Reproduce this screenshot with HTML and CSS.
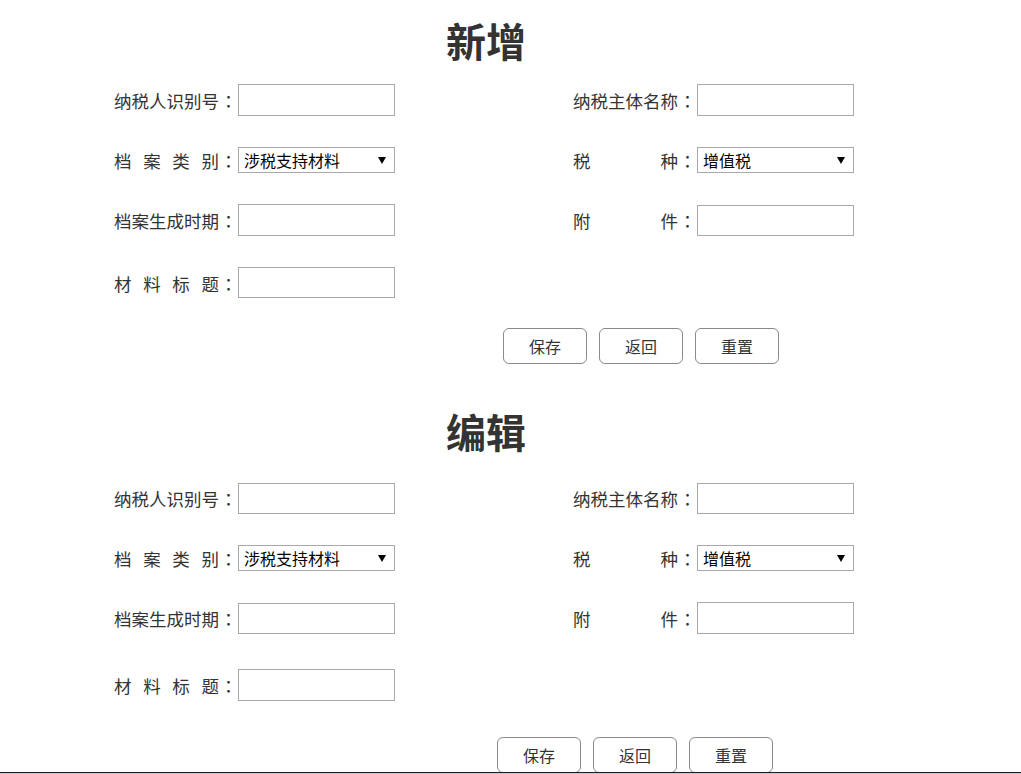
FILE: index.html
```html
<!DOCTYPE html>
<html lang="zh-CN">
  <head>
    <meta charset="UTF-8" />
    <meta name="viewport" content="width=device-width, initial-scale=1.0" />
    <title>涉税档案</title>
    <link rel="stylesheet" href="styles.css">
  </head>
  <body>
    <div class="page">
      <!-- 新增 -->
      <section class="panel panel-add">
        <h2 class="panel-title">新增</h2>
        <div class="form-grid">
          <div class="field">
            <label class="field-label"><span class="label-name">纳税人识别号</span><span class="label-colon">：</span></label>
            <input type="text" class="field-input" />
          </div>
          <div class="field">
            <label class="field-label"><span class="label-name">纳税主体名称</span><span class="label-colon">：</span></label>
            <input type="text" class="field-input" />
          </div>
          <div class="field">
            <label class="field-label"><span class="label-name">档案类别</span><span class="label-colon">：</span></label>
            <div class="select-wrap">
              <select class="field-select">
                <option>涉税支持材料</option>
              </select>
            </div>
          </div>
          <div class="field">
            <label class="field-label"><span class="label-name">税种</span><span class="label-colon">：</span></label>
            <div class="select-wrap">
              <select class="field-select">
                <option>增值税</option>
              </select>
            </div>
          </div>
          <div class="field">
            <label class="field-label"><span class="label-name">档案生成时期</span><span class="label-colon">：</span></label>
            <input type="text" class="field-input" />
          </div>
          <div class="field">
            <label class="field-label"><span class="label-name">附件</span><span class="label-colon">：</span></label>
            <input type="text" class="field-input short" />
          </div>
          <div class="field">
            <label class="field-label"><span class="label-name">材料标题</span><span class="label-colon">：</span></label>
            <input type="text" class="field-input short" />
          </div>
        </div>
        <div class="actions">
          <button class="btn">保存</button>
          <button class="btn">返回</button>
          <button class="btn">重置</button>
        </div>
      </section>

      <!-- 编辑 -->
      <section class="panel panel-edit">
        <h2 class="panel-title">编辑</h2>
        <div class="form-grid">
          <div class="field">
            <label class="field-label"><span class="label-name">纳税人识别号</span><span class="label-colon">：</span></label>
            <input type="text" class="field-input short" />
          </div>
          <div class="field">
            <label class="field-label"><span class="label-name">纳税主体名称</span><span class="label-colon">：</span></label>
            <input type="text" class="field-input short" />
          </div>
          <div class="field">
            <label class="field-label"><span class="label-name">档案类别</span><span class="label-colon">：</span></label>
            <div class="select-wrap">
              <select class="field-select">
                <option>涉税支持材料</option>
              </select>
            </div>
          </div>
          <div class="field">
            <label class="field-label"><span class="label-name">税种</span><span class="label-colon">：</span></label>
            <div class="select-wrap">
              <select class="field-select">
                <option>增值税</option>
              </select>
            </div>
          </div>
          <div class="field">
            <label class="field-label"><span class="label-name">档案生成时期</span><span class="label-colon">：</span></label>
            <input type="text" class="field-input short" />
          </div>
          <div class="field">
            <label class="field-label"><span class="label-name">附件</span><span class="label-colon">：</span></label>
            <input type="text" class="field-input" />
          </div>
          <div class="field">
            <label class="field-label"><span class="label-name">材料标题</span><span class="label-colon">：</span></label>
            <input type="text" class="field-input" />
          </div>
        </div>
        <div class="actions">
          <button class="btn">保存</button>
          <button class="btn">返回</button>
          <button class="btn">重置</button>
        </div>
      </section>
      <div class="page-bottom"></div>
    </div>
  </body>
</html>
```

FILE: styles.css
```css
body {
  margin: 0;
  padding: 0;
  background-color: #fff;
  color: #333;
  font-family: "Noto Sans CJK SC", sans-serif;
}
.page {
  width: 1021px;
  overflow: hidden;
}
.panel-add {
  padding-top: 16px;
}
.panel-edit {
  margin-top: 43px;
}
.panel-title {
  width: 972px;
  margin: 0;
  font-size: 40px;
  line-height: 48px;
  font-weight: bold;
  text-align: center;
  color: #333;
}

/* two column form */
.form-grid {
  display: grid;
  grid-template-columns: 459px 459px;
  padding-left: 114px;
}
.panel-add .form-grid {
  margin-top: 6px;
  grid-template-rows: 60px 60px 60px 65px;
}
.panel-edit .form-grid {
  margin-top: 13px;
  grid-template-rows: 60px 60px 60px 74px;
}
.field {
  display: flex;
  align-items: center;
}
.field-label {
  flex: 0 0 124px;
  font-size: 17.5px;
  line-height: 24px;
  padding-top: 2px;
  color: #333;
  white-space: nowrap;
}
.label-name {
  display: inline-block;
  width: 105px;
  text-align: justify;
  text-align-last: justify;
  vertical-align: top;
}
.label-colon {
  display: inline-block;
  width: 19px;
  text-align: center;
  vertical-align: top;
  font-family: "Noto Sans CJK TC", sans-serif;
}
.field-input {
  box-sizing: border-box;
  width: 157px;
  height: 32px;
  margin: 0;
  padding: 0 4px;
  border: 1px solid #a9a9a9;
  border-radius: 0;
  font-size: 16px;
  background: #fff;
}
.field-input.short {
  height: 31px;
}
.select-wrap {
  position: relative;
  width: 157px;
  height: 26px;
}
.select-wrap::after {
  content: "";
  position: absolute;
  right: 9px;
  top: 10px;
  border-left: 4px solid transparent;
  border-right: 4px solid transparent;
  border-top: 7px solid #000;
  pointer-events: none;
}
.field-select {
  -webkit-appearance: none;
  appearance: none;
  box-sizing: border-box;
  width: 157px;
  height: 26px;
  margin: 0;
  padding: 0 0 0 5px;
  border: 1px solid #a9a9a9;
  border-radius: 0;
  background: #fff;
  color: #000;
  font-family: "Noto Sans CJK SC", sans-serif;
  font-size: 16px;
  line-height: 24px;
}

/* buttons */
.actions {
  display: flex;
  gap: 12px;
}
.panel-add .actions {
  margin-top: 13px;
  padding-left: 503px;
}
.panel-edit .actions {
  margin-top: 15px;
  padding-left: 497px;
}
.btn {
  box-sizing: border-box;
  width: 84px;
  height: 36px;
  padding: 0;
  border: 1px solid #8a8a8a;
  border-radius: 6px;
  background-color: #fff;
  color: #333;
  font-family: "Noto Sans CJK SC", sans-serif;
  font-size: 16px;
  cursor: pointer;
}
.page-bottom {
  position: relative;
  margin-top: -1px;
  height: 1px;
  border-top: 1px solid #1a1a1a;
  background-color: #c7ccd4;
}
```
